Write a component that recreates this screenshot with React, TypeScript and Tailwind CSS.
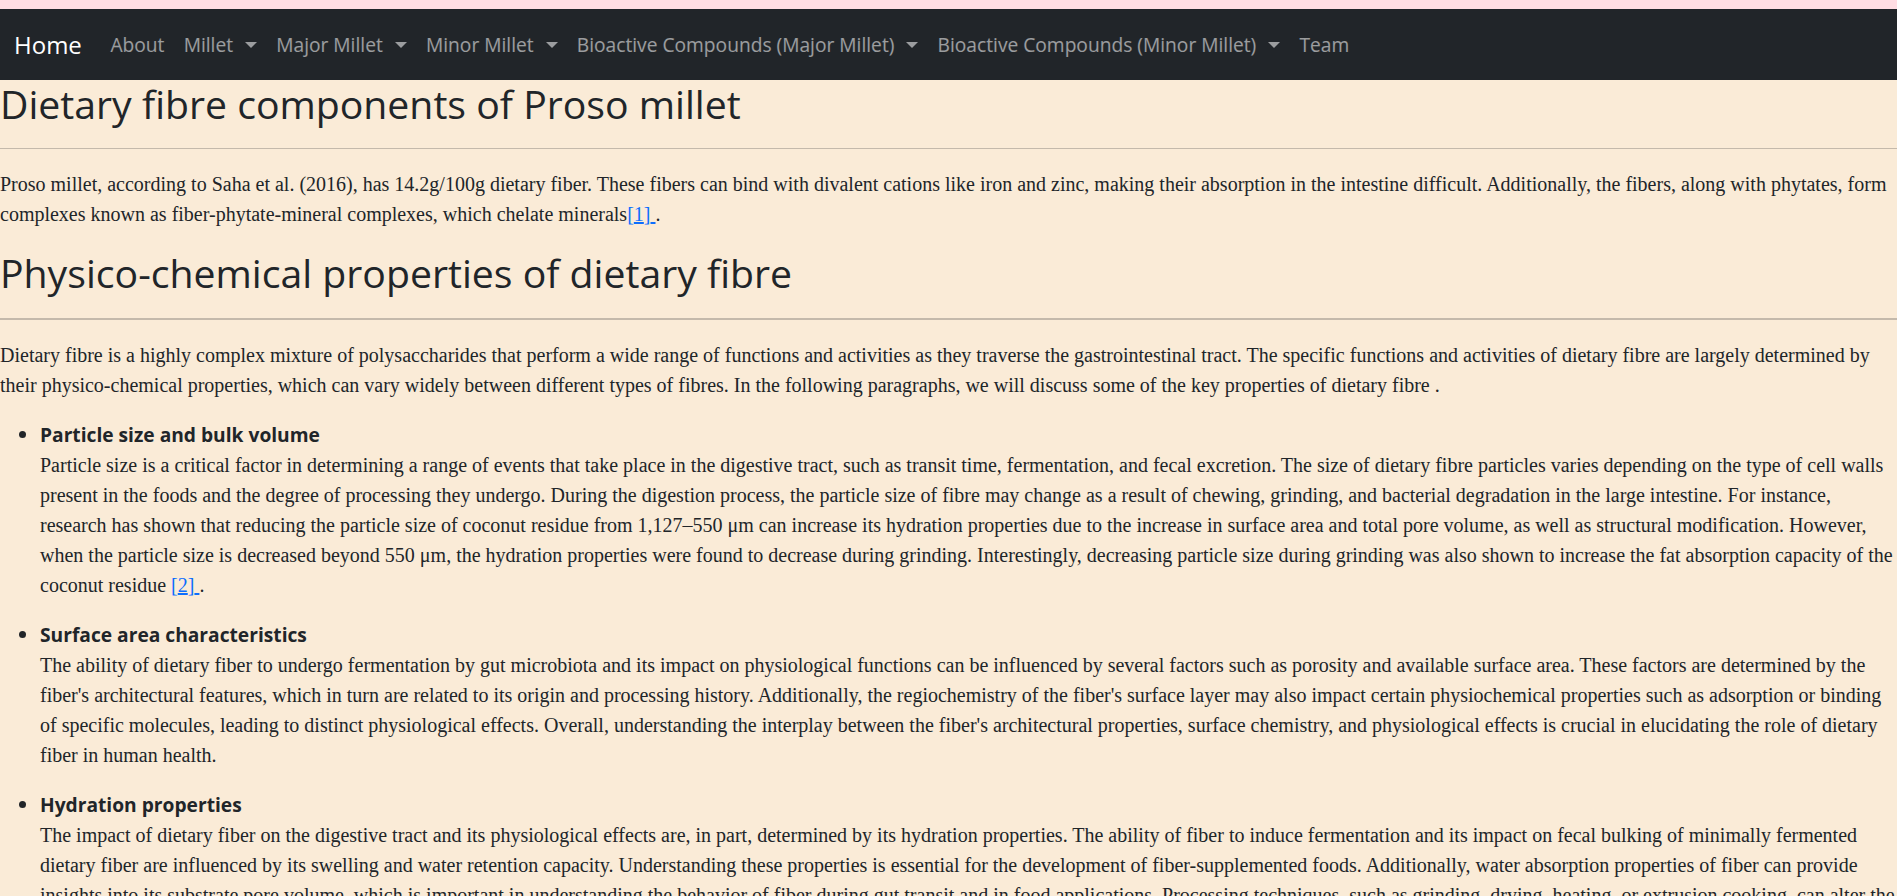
const serif = 'font-["Liberation_Serif","Times_New_Roman",serif]'

const navItems = [
  { label: 'About', caret: false },
  { label: 'Millet', caret: true },
  { label: 'Major Millet', caret: true },
  { label: 'Minor Millet', caret: true },
  { label: 'Bioactive Compounds (Major Millet)', caret: true },
  { label: 'Bioactive Compounds (Minor Millet)', caret: true },
  { label: 'Team', caret: false },
]

const Caret = () => (
  <span className="inline-block ml-[12px] align-[4px] w-0 h-0 border-t-[6px] border-x-[6px] border-x-transparent border-t-current" />
)

const Ref = ({ n }: { n: number }) => (
  <a href="#" className="text-[#0d6efd] underline">
    [{n}]{' '}
  </a>
)

const items = [
  {
    title: 'Particle size and bulk volume',
    body: (
      <>
        Particle size is a critical factor in determining a range of events that take place in the digestive tract, such
        as transit time, fermentation, and fecal excretion. The size of dietary fibre particles varies depending on the
        type of cell walls present in the foods and the degree of processing they undergo. During the digestion process,
        the particle size of fibre may change as a result of chewing, grinding, and bacterial degradation in the large
        intestine. For instance, research has shown that reducing the particle size of coconut residue from 1,127–550 μm
        can increase its hydration properties due to the increase in surface area and total pore volume, as well as
        structural modification. However, when the particle size is decreased beyond 550 μm, the hydration properties
        were found to decrease during grinding. Interestingly, decreasing particle size during grinding was also shown to
        increase the fat absorption capacity of the coconut residue <Ref n={2} />.
      </>
    ),
  },
  {
    title: 'Surface area characteristics',
    body: (
      <>
        The ability of dietary fiber to undergo fermentation by gut microbiota and its impact on physiological functions
        can be influenced by several factors such as porosity and available surface area. These factors are determined by
        the fiber's architectural features, which in turn are related to its origin and processing history. Additionally,
        the regiochemistry of the fiber's surface layer may also impact certain physiochemical properties such as
        adsorption or binding of specific molecules, leading to distinct physiological effects. Overall, understanding the
        interplay between the fiber's architectural properties, surface chemistry, and physiological effects is crucial in
        elucidating the role of dietary fiber in human health.
      </>
    ),
  },
  {
    title: 'Hydration properties',
    body: (
      <>
        The impact of dietary fiber on the digestive tract and its physiological effects are, in part, determined by its
        hydration properties. The ability of fiber to induce fermentation and its impact on fecal bulking of minimally
        fermented dietary fiber are influenced by its swelling and water retention capacity. Understanding these
        properties is essential for the development of fiber-supplemented foods. Additionally, water absorption
        properties of fiber can provide insights into its substrate pore volume, which is important in understanding the
        behavior of fiber during gut transit and in food applications. Processing techniques, such as grinding, drying,
        heating, or extrusion cooking, can alter the physical properties of the fibre matrix and thereby affect its
        hydration properties.
      </>
    ),
  },
]

export default function App() {
  return (
    <div className='min-h-screen bg-[#faebd7] text-[#212529] font-["Open_Sans",sans-serif]'>
      <div className="h-[9px] bg-[#ffdde3]" />
      <nav className="h-[71px] bg-[#212529] flex items-center px-[14px]">
        <a href="#" className="text-[24px] text-white mr-[19px] leading-[36px]">
          Home
        </a>
        <ul className="flex items-center">
          {navItems.map((item) => (
            <li key={item.label}>
              <a href="#" className="block px-[9.6px] text-[19.2px] leading-[29px] text-white/55">
                {item.label}
                {item.caret && <Caret />}
              </a>
            </li>
          ))}
        </ul>
      </nav>

      <h2 className="text-[39.2px] font-medium leading-[48px]">Dietary fibre components of Proso millet</h2>
      <hr className="mt-[20px] border-0 h-px bg-[#c4b9ab]" />
      <p className={`${serif} mt-[20px] mb-[20px] text-[20px] leading-[30px]`}>
        Proso millet, according to Saha et al. (2016), has 14.2g/100g dietary fiber. These fibers can bind with divalent
        cations like iron and zinc, making their absorption in the intestine difficult. Additionally, the fibers, along
        with phytates, form complexes known as fiber-phytate-mineral complexes, which chelate minerals<Ref n={1} />.
      </p>

      <h2 className="text-[39.2px] font-medium leading-[48px]">Physico-chemical properties of dietary fibre</h2>
      <hr className="mt-[21px] border-0 h-[2px] bg-[#c4b9ab]" />
      <p className={`${serif} mt-[20px] mb-[20px] text-[20px] leading-[30px]`}>
        Dietary fibre is a highly complex mixture of polysaccharides that perform a wide range of functions and
        activities as they traverse the gastrointestinal tract. The specific functions and activities of dietary fibre
        are largely determined by their physico-chemical properties, which can vary widely between different types of
        fibres. In the following paragraphs, we will discuss some of the key properties of dietary fibre .
      </p>

      <ul className="pl-[40px] list-disc text-[20px] leading-[30px]">
        {items.map((item) => (
          <li key={item.title}>
            <strong className="font-bold text-[19.2px]">{item.title}</strong>
            <p className={`${serif} mb-[20px]`}>{item.body}</p>
          </li>
        ))}
      </ul>
    </div>
  )
}
